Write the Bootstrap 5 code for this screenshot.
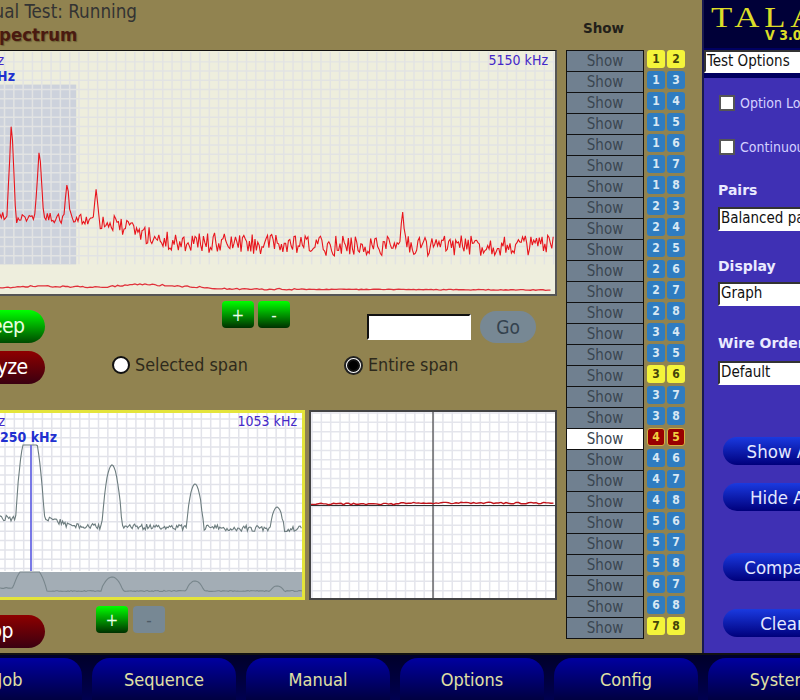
<!DOCTYPE html>
<html lang="en">
<head>
<meta charset="utf-8">
<title>Manual Test</title>
<link rel="stylesheet" href="https://cdn.jsdelivr.net/npm/bootstrap@5.3.0/dist/css/bootstrap.min.css">
<style>
html,body{height:700px;overflow:hidden;background:#918350;}
body{font-family:"DejaVu Sans Condensed","DejaVu Sans",sans-serif;font-stretch:condensed;}
.stage{width:1120px;height:700px;margin-left:-100px;}
.work{width:802px;height:653px;background:#918350;}
.leftcol{width:657px;}
.ttl{height:50px;padding-left:58px;}
.ttl-a{font-size:18.7px;line-height:24px;color:#333;}
.ttl-b{font-size:18.5px;line-height:22px;font-weight:700;color:#4a1a10;margin-left:29px;text-shadow:1px 1px 1px #6b6035;}
.plot{position:relative;display:block;background:#eeeedd;border:1px solid #111;border-right:2px solid #555;border-bottom:2px solid #555;}
.plot svg{display:block;position:absolute;inset:0;width:100%;height:100%;}
.plot-top{height:246px;}
.plot-a{width:405px;height:190px;background:#fff;border:3px solid #e4e43a;}
.plot-b{width:248px;height:190px;background:#fff;border:2px solid #444;}
.lbl{position:absolute;font-size:14px;line-height:16px;color:#4428c8;white-space:nowrap;}
.lbl-b{font-weight:700;color:#2030d0;}
.ctl{height:114px;}
.pillcol{width:145px;}
.pill{display:block;width:105px;height:33px;margin-left:40px;padding:0;border:0;border-radius:17px;font-size:21px;line-height:33px;letter-spacing:-.6px;color:#fff;}
.pill-go{background:linear-gradient(#0f0,#004a00);color:#e8ffe0;padding-left:4px;}
.pill-red{background:linear-gradient(#8e0000,#3a0010);}
.zoomer{width:32px;height:27px;padding:0;border:0;border-radius:4px;font-size:17px;line-height:26px;color:#eaffea;background:linear-gradient(#0f0,#003000);}
.zoomer-off{background:#778894;color:#4d5b66;}
.entry{width:104px;height:26px;border:2px solid #fff;border-top-color:#111;border-left-color:#111;background:#fff;padding:0;}
.gobtn{width:56px;height:32px;padding:0;border:0;border-radius:16px;background:#778894;color:#34424e;font-size:19px;line-height:32px;}
.rad{appearance:none;width:18px;height:18px;border:2px solid #111;border-radius:50%;background:#fff;margin:0;}
.rad-on{background:#000;box-shadow:inset 0 0 0 2px #111;border-color:#fff;outline:2px solid #222;outline-offset:-1px;width:17px;height:17px;}
.radtxt{font-size:17.8px;line-height:24px;color:#2e2a1c;}
.pairs{margin-left:9px;width:119px;}
.pairhead{height:50px;padding:17px 0 0 17px;font-family:"DejaVu Sans",sans-serif;font-stretch:normal;font-size:13.5px;line-height:22px;font-weight:700;color:#22201a;}
.prow{height:21px;}
.showcell{display:block;width:78px;height:22px;margin-bottom:-1px;padding:0;background:#708090;border:1px solid #111;border-radius:0;font-size:15px;line-height:16px;color:#3a4650;text-align:center;}
.showcell-on{background:#fff;color:#3a4650;}
.chip{width:18px;height:18px;margin-left:3px;border-radius:3px;background:#2f7cc0;color:#d8e8f4;font-size:12px;line-height:18px;text-align:center;font-weight:700;}
.chip+.chip{margin-left:2px;}
.chip-y{background:#f4f43a;color:#44440a;}
.chip-r{background:#990000;color:#f0d040;border:1px solid #d8b040;line-height:16px;}
.side{width:318px;height:653px;border-left:2px solid #1a1a50;background:#3f30b4;}
.brand{height:48px;background:#000038;color:#dcdc28;padding:2px 0 0 7px;position:relative;}
.brand-word{font-family:"Liberation Serif",serif;font-size:29px;line-height:30px;letter-spacing:4px;transform:scaleX(1.2);transform-origin:left center;}
.brand-ver{position:absolute;left:61px;top:27px;font-size:14px;line-height:16px;font-weight:700;white-space:nowrap;}
.optbar{height:30px;background:#000060;padding:2px 0 0 0;}
.fake-sel{width:280px;border:2px solid #fff;border-top-color:#333;border-left-color:#333;background:#fff;border-radius:0;color:#111;font-size:15px;line-height:19px;padding:0 0 0 1px;box-shadow:none;}
.optbar .fake-sel{height:23px;}
.panel{padding:17px 0 0 14px;color:#dcdcff;}
.panel .fake-sel{width:200px;height:24px;}
.optline{height:16px;font-size:14px;line-height:16px;white-space:nowrap;color:#d4d0ff;}
.optline .form-check-input{width:16px;height:16px;margin:0 5px 0 1px;border-radius:0;border:2px solid #555;float:none;}
.fld{font-family:"DejaVu Sans",sans-serif;font-stretch:normal;font-size:14px;line-height:18px;font-weight:700;color:#eaeaff;}
.acts{width:118px;margin-left:5px;}
.act{display:block;width:118px;height:28px;padding:0;border:0;border-radius:14px;font-size:18.5px;line-height:27px;color:#e4e8ff;background:linear-gradient(#1a3ae0,#00007c);}
.navbar-tala{height:47px;width:1120px;background:linear-gradient(#00002a,#000050);border-top:2px solid #111;padding:3px 0 0 38px;gap:10px;}
.navpill{width:144px;height:44px;padding:0;border:0;border-radius:18px 18px 0 0;background:linear-gradient(#0000a0,#00003c);color:#e0e0a4;font-size:18px;line-height:38px;text-align:center;}
</style>
</head>
<body>
<div class="stage d-flex flex-column">
  <div class="d-flex">
    <div class="work d-flex">
      <div class="leftcol">
        <div class="ttl">
          <div class="ttl-a">Manual Test: Running</div>
          <div class="ttl-b">Spectrum</div>
        </div>
        <div class="plot plot-top">
          <svg viewBox="-100 50 657 246" preserveAspectRatio="none" aria-hidden="true">
            <rect x="-100" y="84" width="176" height="182" fill="#cdd2dc"/>
            <g id="g1" stroke="#e2e3e3" stroke-width="1.5"></g>
            <polyline id="t1" fill="none" stroke="#e8141c" stroke-width="1.1"/>
            <polyline id="o1" fill="none" stroke="#e0303a" stroke-width="1.3"/>
          </svg>
          <span class="lbl" style="right:551px;top:1px">0 kHz</span>
          <span class="lbl lbl-b" style="right:540px;top:17px">1250 kHz</span>
          <span class="lbl" style="right:7px;top:1px">5150 kHz</span>
        </div>
        <div class="ctl d-flex">
          <div class="pillcol d-flex flex-column gap-2 pt-3">
            <button class="pill pill-go" type="button" style="margin-top:-2px">Sweep</button>
            <button class="pill pill-red" type="button">Analyze</button>
          </div>
          <div class="flex-grow-1">
            <div class="d-flex align-items-start" style="height:47px">
              <button class="zoomer" type="button" style="margin:5px 0 0 177px">+</button>
              <button class="zoomer" type="button" style="margin:5px 0 0 4px">-</button>
              <input class="entry" type="text" style="margin:18px 0 0 77px" aria-label="Frequency">
              <button class="gobtn" type="button" style="margin:15px 0 0 9px">Go</button>
            </div>
            <div class="d-flex align-items-center" style="height:44px;padding-left:67px">
              <input class="rad" type="radio" name="span" aria-label="Selected span">
              <span class="radtxt" style="width:210px;margin-left:5px">Selected span</span>
              <input class="rad rad-on" type="radio" name="span" aria-label="Entire span">
              <span class="radtxt" style="margin-left:6px">Entire span</span>
            </div>
          </div>
        </div>
        <div class="d-flex" style="gap:4px">
          <div class="plot plot-a">
            <svg viewBox="-97 413 399 184" preserveAspectRatio="none" aria-hidden="true">
              <rect x="-97" y="572" width="399" height="25" fill="#a3adb5"/>
              <g id="g2" stroke="#e2e3ea" stroke-width="1.5"></g>
              <polyline id="t2" fill="none" stroke="#6c7c7e" stroke-width="1.1"/>
              <polyline id="o2" fill="none" stroke="#78868c" stroke-width="1.1"/>
              <line x1="31" y1="445" x2="31" y2="571" stroke="#6a6ae4" stroke-width="1.8"/>
            </svg>
            <span class="lbl" style="right:297px;top:0">0 kHz</span>
            <span class="lbl lbl-b" style="right:245px;top:16px">1250 kHz</span>
            <span class="lbl" style="right:5px;top:0">1053 kHz</span>
          </div>
          <div class="plot plot-b">
            <svg viewBox="311 412 244 186" preserveAspectRatio="none" aria-hidden="true">
              <g id="g3" stroke="#e4e5ec" stroke-width="1.5"></g>
              <line x1="433" y1="412" x2="433" y2="598" stroke="#222" stroke-width="1"/>
              <line x1="311" y1="505.5" x2="555" y2="505.5" stroke="#333" stroke-width="1"/>
              <polyline id="t3" fill="none" stroke="#c0141c" stroke-width="1.4"/>
            </svg>
          </div>
        </div>
        <div class="d-flex">
          <div class="pillcol pt-3"><button class="pill pill-red" type="button" style="margin-top:-1px">Stop</button></div>
          <div class="d-flex align-items-start" style="padding-left:51px;padding-top:6px;gap:5px">
            <button class="zoomer" type="button">+</button>
            <button class="zoomer zoomer-off" type="button">-</button>
          </div>
        </div>
      </div>
      <div class="pairs" id="pairs"><div class="pairhead">Show</div></div>
    </div>
    <div class="side">
      <div class="brand"><div class="brand-word">TALAN</div><div class="brand-ver">V 3.0</div></div>
      <div class="optbar"><div class="fake-sel">Test Options</div></div>
      <div class="panel">
        <div class="optline d-flex align-items-center"><input class="form-check-input" type="checkbox" aria-label="Option Lock">Option Lock</div>
        <div class="optline d-flex align-items-center" style="margin-top:28px"><input class="form-check-input" type="checkbox" aria-label="Continuous">Continuous</div>
        <div class="fld" style="margin-top:26px">Pairs</div>
        <div class="fake-sel" style="margin-top:8px">Balanced pairs</div>
        <div class="fld" style="margin-top:26px">Display</div>
        <div class="fake-sel" style="margin-top:7px">Graph</div>
        <div class="fld" style="margin-top:28px">Wire Order</div>
        <div class="fake-sel" style="margin-top:9px">Default</div>
        <div class="acts">
          <button class="act" type="button" style="margin-top:52px">Show All</button>
          <button class="act" type="button" style="margin-top:18px">Hide All</button>
          <button class="act" type="button" style="margin-top:42px">Compare</button>
          <button class="act" type="button" style="margin-top:28px">Clear</button>
        </div>
      </div>
    </div>
  </div>
  <div class="navbar-tala d-flex">
    <button class="navpill" type="button">Job</button>
    <button class="navpill" type="button">Sequence</button>
    <button class="navpill" type="button">Manual</button>
    <button class="navpill" type="button">Options</button>
    <button class="navpill" type="button">Config</button>
    <button class="navpill" type="button">System</button>
  </div>
</div>
<script src="https://cdn.jsdelivr.net/npm/bootstrap@5.3.0/dist/js/bootstrap.bundle.min.js"></script>
<script>
(function(){
  var seed=12345;
  function rnd(){seed=(seed*16807)%2147483647;return seed/2147483647;}
  function interp(pts,x){
    for(var i=1;i<pts.length;i++){if(x<=pts[i][0]){var a=pts[i-1],b=pts[i];return a[1]+(b[1]-a[1])*(x-a[0])/(b[0]-a[0]);}}
    return pts[pts.length-1][1];
  }
  function grid(id,x0,x1,y0,y1,ox,oy){
    var g=document.getElementById(id),ns='http://www.w3.org/2000/svg';
    function ln(a,b,c,d){var l=document.createElementNS(ns,'line');l.setAttribute('x1',a);l.setAttribute('y1',b);l.setAttribute('x2',c);l.setAttribute('y2',d);g.appendChild(l);}
    for(var x=ox;x<=x1;x+=9.35){if(x>=x0)ln(x,y0,x,y1);}
    for(var y=oy;y<=y1;y+=9.35){if(y>=y0)ln(x0,y,x1,y);}
  }
  function peaks(list,x,base){
    var y=base;
    list.forEach(function(p){var d=Math.abs(x-p[0]);if(d<p[2]){var t=1-d/p[2];var v=base-(base-p[1])*Math.pow(t,p[3]||1);if(v<y)y=v;}});
    return y;
  }
  function domes(list,x,base){
    var y=base;
    list.forEach(function(p){var d=Math.abs(x-p[0]);if(d<p[2]){var r=d/p[2];var v=base-(base-p[1])*Math.pow(1-r*r,.85);if(v<y)y=v;}});
    return y;
  }
  function set(id,a){document.getElementById(id).setAttribute('points',a.map(function(p){return p[0].toFixed(1)+','+p[1].toFixed(1);}).join(' '));}

  grid('g1',-100,557,51,266,4,61);
  var base1=[[-100,214],[0,218],[20,219],[60,219],[100,222],[130,230],[165,243],[300,247],[557,247]];
  var pk1=[[11,118,4.5],[39,147,4.5],[67,182,3.5],[96,190,3.5],[404,213,3]];
  var a=[];
  for(var x=-100;x<=556;x+=1.4){
    var amp=x<100?11:(x<165?18:21);
    var b=interp(base1,x)+(rnd()-.5)*amp;
    a.push([x,Math.min(b,peaks(pk1,x,b))]);
  }
  set('t1',a);
  var base1o=[[-100,291],[0,290],[30,288],[100,289],[140,286],[200,289],[230,291],[557,292]];
  a=[];for(x=-100;x<=553;x+=2.5){a.push([x,interp(base1o,x)+(x<300?(rnd()-.5)*1.6:(rnd()-.5)*.8)]);}
  set('o1',a);

  grid('g2',-97,302,413,571,5,419);
  var pk2=[[30,425,14],[112,465,10],[195,484,8.5],[277,507,7]];
  var base2=[[-97,516],[10,518],[50,518],[70,526],[302,529]];
  a=[];for(x=-97;x<=302;x+=1.2){
    var b2=interp(base2,x)+(rnd()-.5)*6;
    if(x>14&&x<46){b2-=(1-Math.abs(x-30)/16)*14;}
    a.push([x,Math.max(445,Math.min(b2,domes(pk2,x,b2)))]);
  }
  set('t2',a);
  var pk2o=[[30,565,17],[112,577,11],[195,581,9],[277,586,7]];
  a=[];for(x=-97;x<=302;x+=1.5){
    var b3=(x<40?588:591)+(rnd()-.5)*1;
    a.push([x,Math.max(572,Math.min(b3,domes(pk2o,x,b3)))]);
  }
  set('o2',a);

  grid('g3',311,555,412,598,312,413);
  a=[];for(x=311;x<=555;x+=2.5){a.push([x,(x<400?504:503)+(rnd()-.5)*1.6]);}
  set('t3',a);

  var host=document.getElementById('pairs');
  var yellow={'12':1,'36':1,'78':1};
  for(var i=1;i<8;i++){for(var j=i+1;j<=8;j++){
    var k=''+i+j,on=k==='45',row=document.createElement('div');
    row.className='prow d-flex';
    var cls=yellow[k]?' chip-y':(on?' chip-r':'');
    row.innerHTML='<button type="button" class="showcell'+(on?' showcell-on':'')+'">Show</button><div class="chip'+cls+'">'+i+'</div><div class="chip'+cls+'">'+j+'</div>';
    host.appendChild(row);
  }}
})();
</script>
</body>
</html>
